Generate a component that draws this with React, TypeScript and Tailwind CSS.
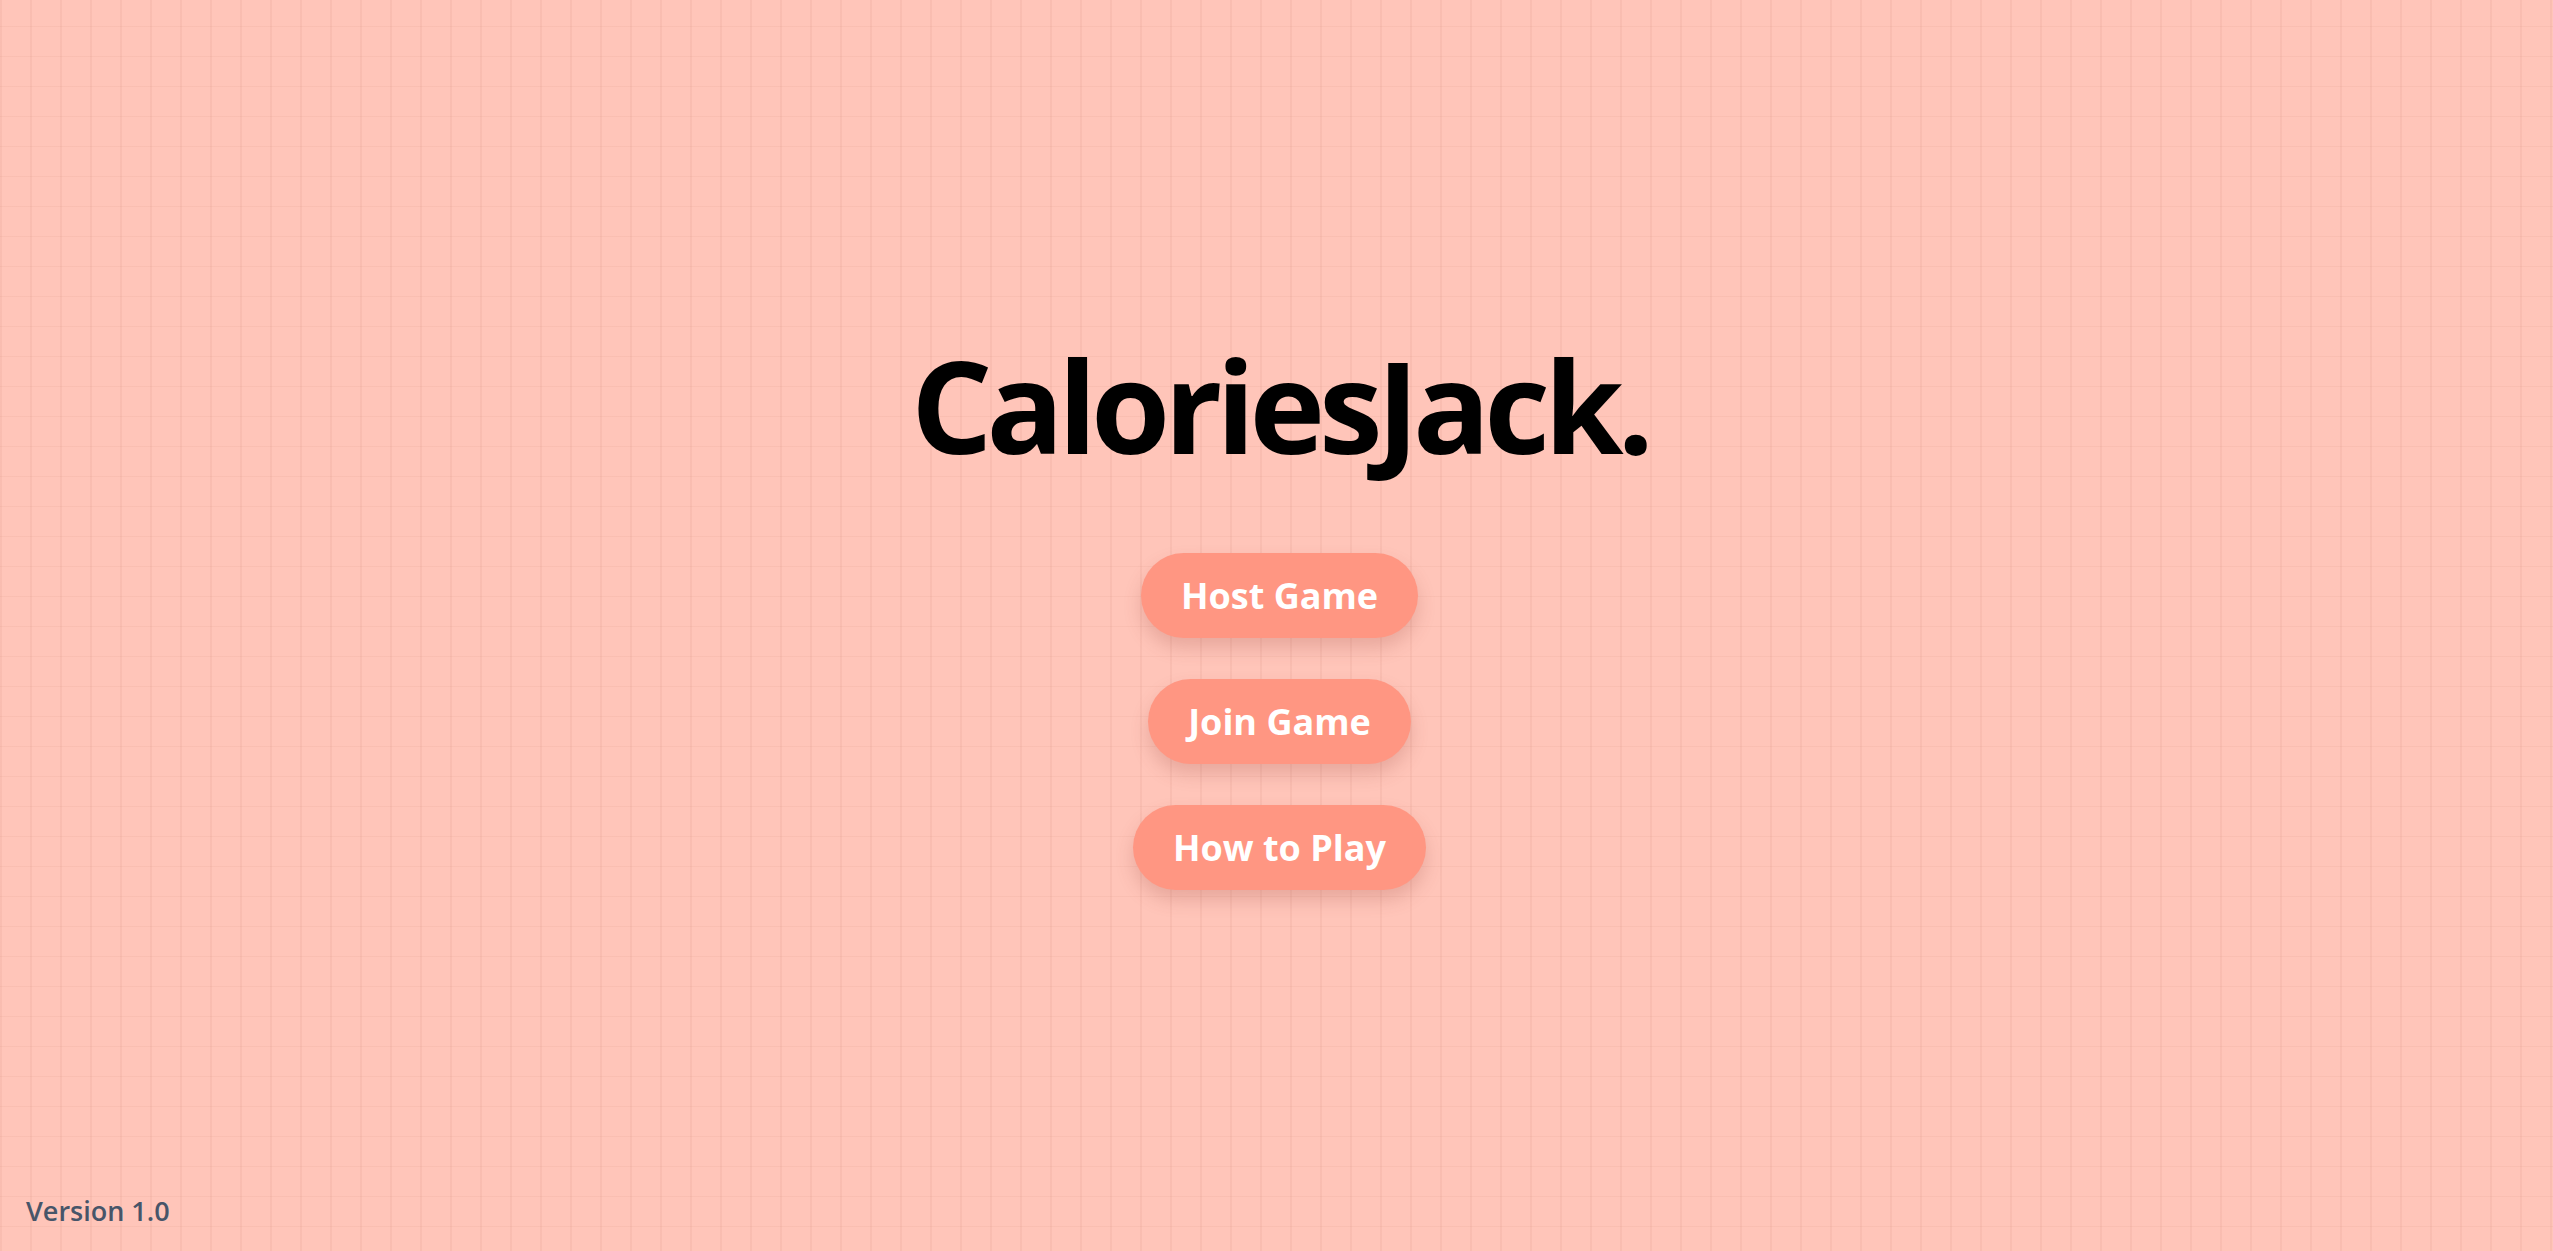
export default function App() {
  return (
    <main className="relative flex min-h-screen flex-col items-center justify-center bg-[#ffc5b9] bg-[linear-gradient(to_right,rgba(190,110,95,0.09)_2px,transparent_2px),linear-gradient(to_bottom,rgba(190,110,95,0.08)_1px,transparent_1px)] bg-[size:30px_30px] bg-[position:0_26px] pl-[6px] font-['Open_Sans',sans-serif]">
      {/* ─── Title ─────────────────────────────── */}
      <h1 className="-mt-[20px] text-[128px] leading-none font-bold tracking-[-6px] text-black">
        CaloriesJack.
      </h1>

      {/* ─── Menu ──────────────────────────────── */}
      <nav className="mt-[84px] flex flex-col items-center gap-[41px]">
        <MenuButton>Host Game</MenuButton>
        <MenuButton>Join Game</MenuButton>
        <MenuButton>How to Play</MenuButton>
      </nav>

      <footer className="absolute bottom-[20px] left-[26px] text-[27px] font-semibold text-[#475569]">
        Version 1.0
      </footer>
    </main>
  );
}

function MenuButton({ children }: { children: React.ReactNode }) {
  return (
    <button className="flex h-[85px] items-center rounded-full bg-[#ff9682] px-10 text-[36px] font-bold text-white shadow-[0_10px_18px_rgba(150,70,60,0.22)]">
      {children}
    </button>
  );
}
